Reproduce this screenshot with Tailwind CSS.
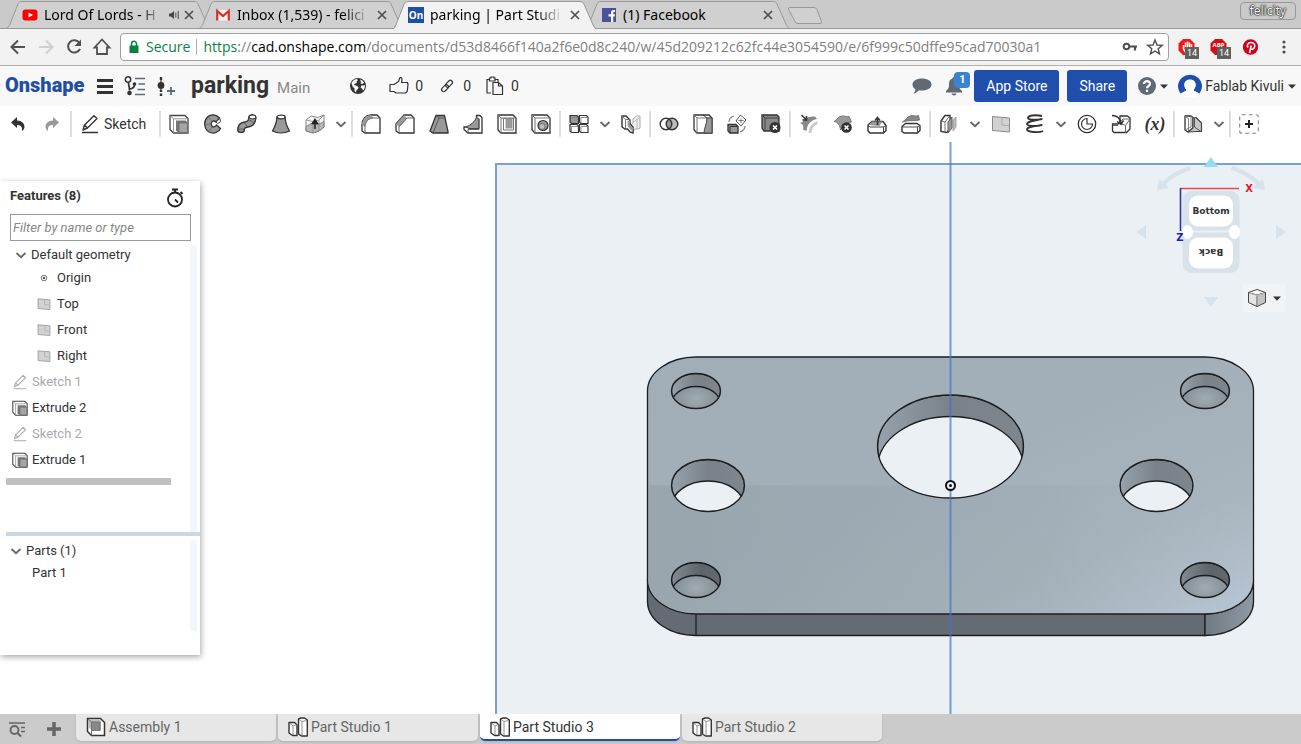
<!DOCTYPE html>
<html lang="en">
<head>
  <meta charset="utf-8">
  <title>parking | Part Studio 3</title>
  <script src="https://cdn.jsdelivr.net/npm/@tailwindcss/browser@4"></script>
</head>
<body class="h-screen flex flex-col overflow-hidden bg-white font-['Roboto',sans-serif] text-sm text-[#333]">

  <!-- Shared icons -->
  <svg class="hidden">
    <symbol id="chevron" viewBox="0 0 12 12"><path d="M1.5 4 6 8.2 10.5 4" fill="none" stroke="#666" stroke-width="1.8"/></symbol>
    <symbol id="caret" viewBox="0 0 8 5"><path d="M0 .5h8L4 4.8z" fill="#333"/></symbol>
    <symbol id="close" viewBox="0 0 16 16"><path d="m4 4 8 8M12 4l-8 8" stroke="#505050" stroke-width="1.7"/></symbol>
    <symbol id="pencil" viewBox="0 0 20 20"><path d="M2 18.5h16M3 16l1.500-5L14 1.800l3 2.800L7.500 14zM4.500 11l3 3" fill="none" stroke="currentColor" stroke-width="1.4" stroke-linejoin="round"/></symbol>
    <symbol id="plane" viewBox="0 0 20 20"><path d="M1.500 2.500l17 1.500v14L1.500 16.500z" fill="#d2d2d2" stroke="#8a8a8a"/><path d="M11 3.500v7.500l7.500.7" fill="none" stroke="#aaa"/></symbol>
    <symbol id="extrude" viewBox="0 0 20 20"><path d="M1 1.500h15l3 3V19H4.500L1 15.500z" fill="#fff" stroke="#444" stroke-width="1.3"/><path d="M1 1.500l3.500 3.300V19M4.500 4.800H19" fill="none" stroke="#888" stroke-width=".9"/><path d="M7 6.500h9.500l2 2V19H9.500L7 16.500z" fill="#777"/><path d="M10 9h8.500v9.500H10z" fill="#a5a5a5" stroke="#666" stroke-width=".7"/></symbol>
    <symbol id="studio" viewBox="0 0 20 20"><path d="M1 5.500h5.500L9 8v10.500H4.500L1 16z" fill="#fff" stroke="#333" stroke-width="1.400" stroke-linejoin="round"/><path d="M1.500 6 5 9v9M5 9l3.500-1.500" fill="none" stroke="#777" stroke-width=".8"/><path d="M10.500 2l2.500-1h3.500L19.300 3v16h-5.800l-3-2z" fill="#fff" stroke="#333" stroke-width="1.400" stroke-linejoin="round"/><path d="M11 2.300l3 2.200v14M14 4.500 18.500 3.500" fill="none" stroke="#777" stroke-width=".8"/></symbol>
    <symbol id="tab-shape" viewBox="0 0 205 28" preserveAspectRatio="none"><path d="M0 28.500C2 28 3 26 4 24L12 4C13 2 14 1.500 16 1.500H188C190 1.500 191 2 192 4L201 24C202 26 203 28 205 28.500" stroke="#999"/></symbol>
  </svg>

  <!-- Browser tabs -->
  <div class="flex h-7 shrink-0 items-stretch bg-[#cacaca] pl-[6px] font-['Noto_Sans',sans-serif] text-black">
    <div class="relative flex w-[205px] items-center pl-4 pr-[14px] pt-[2px]">
      <svg class="absolute inset-0 h-full w-full fill-[#d0d0d0]"><use href="#tab-shape"/></svg>
      <svg class="relative h-4 w-4 shrink-0" viewBox="0 0 16 16"><rect x=".5" y="2.500" width="15" height="11" rx="3" fill="#f00"/><path d="M6.500 5.500v5L11 8z" fill="#fff"/></svg>
      <span class="relative ml-[6px] w-[118px] whitespace-nowrap [mask-image:linear-gradient(to_right,#000_82%,transparent)]">Lord Of Lords - H</span>
      <svg class="relative ml-[6px] h-3 w-3 shrink-0" viewBox="0 0 12 12"><path d="M1 4.500h2L6 2v8L3 7.500H1z" fill="#444"/><path d="M7.800 3.500v5M10.300 2v8" stroke="#666" stroke-width="1.300"/></svg>
      <button class="relative ml-auto" aria-label="Close tab"><svg class="h-4 w-4"><use href="#close"/></svg></button>
    </div>
    <div class="relative -ml-3 flex w-[205px] items-center pl-4 pr-[14px] pt-[2px]">
      <svg class="absolute inset-0 h-full w-full fill-[#d0d0d0]"><use href="#tab-shape"/></svg>
      <svg class="relative h-4 w-4 shrink-0" viewBox="0 0 16 16"><path d="M1.500 3h13v10.500h-13z" fill="#f2f2f2"/><path d="M2.200 13.500V4L8 9l5.800-5v9.500" fill="none" stroke="#d93025" stroke-width="2.200"/></svg>
      <span class="relative ml-[6px] w-[133px] whitespace-nowrap [mask-image:linear-gradient(to_right,#000_80%,transparent)]">Inbox (1,539) - felici</span>
      <button class="relative ml-auto" aria-label="Close tab"><svg class="h-4 w-4"><use href="#close"/></svg></button>
    </div>
    <div class="relative z-10 -ml-3 flex w-[205px] items-center pl-4 pr-[14px] pt-[2px]">
      <svg class="absolute inset-0 h-[29px] w-full fill-[#f2f2f2]"><use href="#tab-shape"/></svg>
      <span class="relative flex h-4 w-4 shrink-0 items-center justify-center bg-[#1f4ea8] text-[10px] font-bold text-white">On</span>
      <span class="relative ml-[6px] w-[133px] whitespace-nowrap [mask-image:linear-gradient(to_right,#000_80%,transparent)]">parking | Part Studi</span>
      <button class="relative ml-auto" aria-label="Close tab"><svg class="h-4 w-4"><use href="#close"/></svg></button>
    </div>
    <div class="relative -ml-3 flex w-[205px] items-center pl-4 pr-[14px] pt-[2px]">
      <svg class="absolute inset-0 h-full w-full fill-[#d0d0d0]"><use href="#tab-shape"/></svg>
      <svg class="relative h-4 w-4 shrink-0" viewBox="0 0 16 16"><path d="M1 1h14v14H1z" fill="#4a52a0"/><path d="M10 15V9.500h-2.500V7.200H10V5.500C10 3.500 11.200 2.800 14 3v2c-1.500 0-1.800.2-1.800 1v1.200H14l-.3 2.300h-1.500V15z" fill="#fff"/></svg>
      <span class="relative ml-[6px] w-[133px] whitespace-nowrap">(1) Facebook</span>
      <button class="relative ml-auto" aria-label="Close tab"><svg class="h-4 w-4"><use href="#close"/></svg></button>
    </div>
    <button aria-label="New tab"><svg class="-ml-1 h-7 w-10" viewBox="0 0 40 28"><path d="M4 7.500h24q2 0 3 2l4.500 12q.5 2-1.500 2H12q-2 0-3-2L2.500 9.500q-.5-2 1.500-2z" fill="#d0d0d0" stroke="#999"/></svg></button>
    <button class="ml-auto mr-[5px] mt-[2px] h-[18px] rounded-sm border border-[#999] px-[9px] text-xs leading-4 text-white [text-shadow:0_0_1px_#000,0_0_1px_#000,0_0_2px_#000]">felicity</button>
  </div>

  <!-- Address bar -->
  <div class="flex h-[38px] shrink-0 items-center border-y border-t-[#999] border-b-[#b0b0b0] bg-[#f2f2f2] pl-2 pr-2 font-['Open_Sans',sans-serif]">
    <button aria-label="Back" class="mr-2"><svg class="h-5 w-5" viewBox="0 0 20 20"><path d="M17 10H4M10 3.500 3.500 10l6.500 6.500" fill="none" stroke="#505050" stroke-width="2"/></svg></button>
    <button aria-label="Forward" class="mr-2"><svg class="h-5 w-5" viewBox="0 0 20 20"><path d="M3 10h13M10 3.500l6.500 6.500-6.500 6.500" fill="none" stroke="#d0d0d0" stroke-width="2"/></svg></button>
    <button aria-label="Reload" class="mr-2"><svg class="h-5 w-5" viewBox="0 0 20 20"><path d="M15.500 6A6.200 6.200 0 1 0 16 11.800" fill="none" stroke="#505050" stroke-width="2"/><path d="M17 2.500V9h-6.500z" fill="#505050"/></svg></button>
    <button aria-label="Home" class="mr-2"><svg class="h-5 w-5" viewBox="0 0 20 20"><path d="M10 2.500 2.500 10.500H5V17h10v-6.500h2.500z" fill="none" stroke="#505050" stroke-width="1.800"/></svg></button>
    <div class="flex h-7 min-w-0 flex-1 items-center rounded-sm border border-[#a0a0a0] bg-white pl-[5px] pr-1">
      <svg class="h-4 w-4 shrink-0" viewBox="0 0 16 16"><path d="M3.500 6.500h9V14h-9z" fill="#0b8043"/><path d="M5.500 7V4.700a2.500 2.500 0 0 1 5 0V7" fill="none" stroke="#0b8043" stroke-width="1.500"/></svg>
      <span class="ml-1 text-[#0b8043]">Secure</span>
      <span class="mx-[6px] h-4 w-px shrink-0 bg-[#aaa]"></span>
      <a href="#" class="min-w-0 flex-1 overflow-hidden whitespace-nowrap text-[#808080]"><span class="text-[#0b8043]">https</span>://<span class="text-black">cad.onshape.com</span>/documents/d53d8466f140a2f6e0d8c240/w/45d209212c62fc44e3054590/e/6f999c50dffe95cad70030a1</a>
      <svg class="mr-2 h-4 w-4 shrink-0" viewBox="0 0 16 16"><circle cx="4.500" cy="7.500" r="2.800" fill="none" stroke="#505050" stroke-width="2"/><path d="M7.500 7.500H15M13 7.500v4" stroke="#505050" stroke-width="2.200"/></svg>
      <svg class="h-[18px] w-[18px] shrink-0" viewBox="0 0 18 18"><path d="m9 2 2 5 5.200.3-4 3.400 1.300 5.200L9 13l-4.500 2.900 1.300-5.200-4-3.400L7 7z" fill="none" stroke="#505050" stroke-width="1.400"/></svg>
    </div>
    <div class="ml-2 flex items-center gap-3">
      <button aria-label="AdBlock" class="relative"><svg class="h-5 w-5" viewBox="0 0 20 20"><path d="M6 2h7l4.500 4.500v7L13 18H6l-4.500-4.500v-7z" fill="#f01818"/><path d="M6.500 8v4l2.500 4h4l1.500-4V7M8.500 11V5.500M10.500 10V4.500M12.500 10V5.500" fill="none" stroke="#fff" stroke-width="1.500"/></svg><span class="absolute left-2 top-[10px] h-3 bg-[#606060] px-[2px] font-['Roboto',sans-serif] text-[9px] leading-3 text-white">14</span></button>
      <button aria-label="Adblock Plus" class="relative"><svg class="h-5 w-5" viewBox="0 0 20 20"><path d="M6 2h7l4.500 4.500v7L13 18H6l-4.500-4.500v-7z" fill="#d40e14"/><text x="9.500" y="9.500" text-anchor="middle" font-size="6" font-weight="bold" fill="#fff">ABP</text></svg><span class="absolute left-2 top-[10px] h-3 bg-[#606060] px-[2px] font-['Roboto',sans-serif] text-[9px] leading-3 text-white">14</span></button>
      <button aria-label="Pinterest"><svg class="h-5 w-5" viewBox="0 0 20 20"><circle cx="9.500" cy="10" r="7.700" fill="#d0021b"/><path d="M8.500 16 10.200 8.500M7 10.500C5.500 8 7 5.500 10 5.500s4.200 2.200 3.600 4.400C13 12.300 10.500 13 9.300 11.500" fill="none" stroke="#fff" stroke-width="1.600"/></svg></button>
      <button aria-label="Browser menu"><svg class="h-5 w-5" viewBox="0 0 20 20" fill="#505050"><circle cx="11" cy="5" r="1.600"/><circle cx="11" cy="10" r="1.600"/><circle cx="11" cy="15" r="1.600"/></svg></button>
    </div>
  </div>

  <!-- Document header -->
  <header class="flex h-10 shrink-0 items-center bg-[#f8f8f8] px-[5px]">
    <a href="#" class="w-[91px] pb-[2px] text-xl font-black leading-6 text-[#1f4ea8]">Onshape</a>
    <button aria-label="Main menu"><svg class="h-[18px] w-[18px]" viewBox="0 0 18 18"><path d="M1 3.500h16M1 9.500h16M1 15.500h16" stroke="#333" stroke-width="3"/></svg></button>
    <button aria-label="Versions and history" class="ml-[10px]"><svg class="h-[22px] w-[22px]" viewBox="0 0 22 22"><circle cx="4" cy="4.500" r="2.700" fill="none" stroke="#333" stroke-width="1.500"/><circle cx="5.500" cy="18" r="2.300" fill="#333"/><path d="M4.500 7.500c0 3 1 4 1 8M5.500 14c3-.5 5-1 5-4V9" fill="none" stroke="#333" stroke-width="1.700"/><circle cx="10.500" cy="9" r="1.800" fill="#333"/><path d="M11 3.500h10M14.500 9h6.500M13.500 14.500H21M11 19.500h10" stroke="#5f6a74" stroke-width="1.600"/></svg></button>
    <button aria-label="Insert" class="ml-[9px]"><svg class="h-[22px] w-[22px]" viewBox="0 0 22 22"><path d="M6 2v3M6 15v2M6 18.500v2.500" stroke="#333" stroke-width="2.400"/><path d="M6 5v12" stroke="#333" stroke-width="1.200"/><circle cx="6" cy="10.500" r="3.400" fill="#333"/><path d="M16 12v8M12 16h8" stroke="#5f6a74" stroke-width="1.800"/></svg></button>
    <h1 class="ml-[14px] text-[23px] font-bold leading-7">parking</h1>
    <span class="ml-2 pt-[6px] text-[15px] text-[#888]">Main</span>
    <svg class="ml-[39px] h-[18px] w-[18px]" viewBox="0 0 18 18"><circle cx="9" cy="9" r="8" fill="#333"/><path d="M2.500 6C3.500 4 5 2.500 7.500 2L9 3 7.500 4.500 8 6 6 6.500 5 8l2 .5L9.500 10 9 12l-1.500 1L7 15.500 5.500 14V11.500L3.500 9.500zM11 2.500c2 .5 3 1.300 4 3L13.500 7l-2-.5L12 5zM12.500 8.500l3.500-.3c0 2.300-.5 3.800-2 5.300L13 11.500l-1.500-1z" fill="#f8f8f8"/></svg>
    <button class="ml-[22px] flex items-center gap-[6px]" aria-label="Likes"><svg class="h-5 w-5" viewBox="0 0 20 20"><path d="M1 8.500h4l4.500-3 1.500-4c2-.3 2.500 1.500 1.500 5h6l.5 2-.8 7-1.700 1.500H7l-2-1.500H1z" fill="none" stroke="#333" stroke-width="1.200" stroke-linejoin="round"/></svg>0</button>
    <button class="ml-[14px] flex items-center gap-[6px]" aria-label="Linked documents"><svg class="h-5 w-5" viewBox="0 0 20 20"><g fill="none" stroke="#333" stroke-width="1.200"><rect x="8" y="5.700" width="8" height="4.200" rx="2.100" transform="rotate(-45 12 7.800)"/><rect x="4" y="10.100" width="8" height="4.200" rx="2.100" transform="rotate(-45 8 12.200)"/></g></svg>0</button>
    <button class="ml-[14px] flex items-center gap-[6px]" aria-label="Copies"><svg class="h-5 w-5" viewBox="0 0 20 20"><path d="M6 17H2V3.500h2.500M9.500 3.500H13V6M4.500 2h1.500V1h3v1h1v3h-5.500z" fill="none" stroke="#333" stroke-width="1.200"/><path d="M8 6.500h5.500L17.500 10v8.500H8zM13.500 6.500V10h4" fill="#f8f8f8" stroke="#333" stroke-width="1.200"/></svg>0</button>

    <button aria-label="Comments" class="ml-auto"><svg class="h-5 w-5" viewBox="0 0 20 20"><path d="M10 2.500c5.500 0 9.500 2.500 9.500 6s-4 6-9.500 6c-1 0-2 0-3-.3-1.500 1.500-3 2.600-5.500 3.300 1-1.500 1.800-2.500 2-4.300C1.500 12 .5 10.500.5 8.500c0-3.500 4-6 9.500-6z" fill="#5f6a74"/></svg></button>
    <button aria-label="Notifications" class="relative ml-3 mr-[10px]"><svg class="h-5 w-5" viewBox="0 0 20 20"><path d="M10 1c1 0 1.500.7 1.500 1.500C14.500 3.500 15 6 15 9c0 3.500 1.500 4.500 3 6v1.500H2V15c1.500-1.500 3-2.500 3-6s.5-5.500 3.500-6.500C8.500 1.700 9 1 10 1zM7.500 17.500h5c-.5 2.500-4.500 2.500-5 0z" fill="#5f6a74"/></svg><span class="absolute -top-1 left-[10px] h-4 w-4 rounded-sm bg-[#3b82d0] text-[11px] font-bold leading-4 text-white">1</span></button>
    <button class="h-8 rounded-[3px] bg-[#1f4ead] px-3 text-white">App Store</button>
    <button class="ml-2 h-8 rounded-[3px] bg-[#1f4ead] px-3 text-white">Share</button>
    <button aria-label="Help" class="ml-[11px] flex items-center gap-1"><svg class="h-[18px] w-[18px]" viewBox="0 0 18 18"><circle cx="9" cy="9" r="9" fill="#5f6a74"/><path d="M6 7c0-4 6.200-3.700 6 0C12 9 9 9 9 11.200M9 12.700V15" fill="none" stroke="#fff" stroke-width="2.200"/></svg><svg class="h-[5px] w-2"><use href="#caret"/></svg></button>
    <button class="ml-[10px] flex items-center"><svg class="mr-[3px] h-6 w-6" viewBox="0 0 24 24"><path d="M2.500 19.500A12 11.700 0 1 1 21.500 19.500L18 18l-3-2c4-3 3.500-10-3-10S5 13 9 16l-3 2z" fill="#1f4ead"/><path d="M12 5.500c6.500 0 7 7 3.500 10.500 1 2 5.500 1.500 5.500 5.500-4 3-14 3-18 0C3 17.500 7.500 18 8.500 16 5 12.500 5.500 5.500 12 5.500z" fill="#fff"/></svg>Fablab Kivuli<svg class="ml-1 h-[5px] w-2"><use href="#caret"/></svg></button>
  </header>

  <!-- Feature toolbar -->
  <div class="flex h-9 shrink-0 items-center bg-white pl-px" role="toolbar">
    <button aria-label="Undo" class="flex w-[34px] justify-center"><svg class="h-4 w-4" viewBox="0 0 16 16"><path d="M1 6.500 7 1v3.500c5 0 7.500 3 7.500 6.500 0 1.500-1 3-2.500 4 .5-4-1-6-5-6V12z" fill="#333"/></svg></button>
    <button aria-label="Redo" class="flex w-[34px] justify-center"><svg class="h-4 w-4" viewBox="0 0 16 16"><path d="M15 6.500 9 1v3.500C4 4.500 1.500 7.500 1.500 11c0 1.500 1 3 2.500 4-.5-4 1-6 5-6V12z" fill="#999"/></svg></button>
    <span class="mx-px h-[26px] w-[2px] bg-[#dcdcdc]"></span>
    <button class="flex w-[85px] items-center pl-[7px]"><svg class="mr-1 h-5 w-5"><use href="#pencil"/></svg>Sketch</button>
    <span class="mx-px h-[26px] w-[2px] bg-[#dcdcdc]"></span>

    <button aria-label="Extrude" class="flex w-[34px] justify-center"><svg class="h-5 w-5"><use href="#extrude"/></svg></button>
    <button aria-label="Revolve" class="flex w-[34px] justify-center"><svg class="h-5 w-5" viewBox="0 0 20 20"><path d="M16.500 4C13 0 8 0 5 2.500 0 7 1 15 6 18c5 2.500 10 0 11.500-3.500l-4-3.500c-1.500 2.500-3.500 2-4.300 1.200-1.500-1.500-1.200-4 .6-5 1.200-.5 2.200-.2 3.200.8z" fill="#999" stroke="#333" stroke-width="1.300"/><path d="M13 8l4-3.500.5 3.500-3 1.500z" fill="#fff" stroke="#444" stroke-width=".9"/><path d="M5 2.500l4 5M1.500 11l7-1.500M6 18l3-6" fill="none" stroke="#666" stroke-width=".8"/></svg></button>
    <button aria-label="Sweep" class="flex w-[34px] justify-center"><svg class="h-5 w-5" viewBox="0 0 20 20"><path d="M12 2.500C11.500 6.500 11 7.500 7.500 8 3 8.500.8 11.500.8 16.500c.5 2.500 6 2.500 6.500 0 0-2.500.7-3 3.700-3.500 5.500-.8 7.500-4 8-9.500C18.500.5 12.500.3 12 2.500z" fill="#999" stroke="#333" stroke-width="1.400"/><ellipse cx="15.500" cy="3" rx="3.400" ry="1.900" fill="#fff" stroke="#333"/><path d="M.8 16.500c.5-2 6-2 6.500 0M7 8l3.500 5M12 6l6 3" fill="none" stroke="#555" stroke-width=".9"/></svg></button>
    <button aria-label="Loft" class="flex w-[34px] justify-center"><svg class="h-5 w-5" viewBox="0 0 20 20"><path d="M6 3c-.3 5-1.500 9-4.500 14 5 2.500 12 2.500 17 0C15.500 12 14.300 8 14 3z" fill="#999" stroke="#333" stroke-width="1.300"/><ellipse cx="10" cy="3" rx="4" ry="1.800" fill="#fff" stroke="#333" stroke-width="1.200"/></svg></button>
    <button aria-label="Thicken" class="flex w-[34px] justify-center"><svg class="h-5 w-5" viewBox="0 0 20 20"><path d="M1 6 6 2l7 1.500L19 1v12l-5 4-6 2-7-2z" fill="#f4f4f4" stroke="#888"/><path d="M1 12.500 6 9.500l7 1 6-3V13l-5 4-6 2-7-2z" fill="#b5b5b5" stroke="#777" stroke-width=".8"/><path d="M1 6l7 1.500 6-1.500 5-5M14 6v11M8 7.500V19" fill="none" stroke="#888" stroke-width=".8"/><path d="M10 15V8M7.500 9.500 10 5.500l2.500 4z" fill="#222" stroke="#222" stroke-width="1.500"/></svg></button>
    <button aria-label="More solids" class="flex w-[18px] justify-center"><svg class="h-3 w-3"><use href="#chevron"/></svg></button>
    <span class="mx-px h-[26px] w-[2px] bg-[#dcdcdc]"></span>

    <button aria-label="Fillet" class="flex w-[34px] justify-center"><svg class="h-5 w-5" viewBox="0 0 20 20"><path d="M1 11C1 5 5 1 10 1h6l3 3v15H4l-3-2z" fill="#fff" stroke="#333" stroke-width="1.300"/><path d="M1 11C1 5 5 1 10 1l2.500 3C7 4 4 8 4 13z" fill="#999"/><path d="M4 19v-6c0-5 3.500-9 8.500-9H19" fill="none" stroke="#555" stroke-width=".9"/></svg></button>
    <button aria-label="Chamfer" class="flex w-[34px] justify-center"><svg class="h-5 w-5" viewBox="0 0 20 20"><path d="M1 10 9 1h7l3 3v15H4l-3-2z" fill="#fff" stroke="#333" stroke-width="1.300"/><path d="M1 10 9 1l3 3-8 9z" fill="#999"/><path d="M4 19v-6l8-9h7" fill="none" stroke="#555" stroke-width=".9"/></svg></button>
    <button aria-label="Draft" class="flex w-[34px] justify-center"><svg class="h-5 w-5" viewBox="0 0 20 20"><path d="M1 17 7 1.500h8.500L19 17.500v1.500H4z" fill="#999" stroke="#333" stroke-width="1.300"/><path d="M4 19 10 4h6M7 1.500 10 4" fill="none" stroke="#555"/></svg></button>
    <button aria-label="Rib" class="flex w-[34px] justify-center"><svg class="h-5 w-5" viewBox="0 0 20 20"><path d="M13.500 1.500H17l2 2V19H5l-4-3.500V13h4l8.500-1z" fill="#fff" stroke="#333" stroke-width="1.300"/><path d="M3 13c5-2 8.500-5 10.500-9.500L16 5v9.500H6z" fill="#999" stroke="#444"/><path d="M5 19v-3.500h11V4.500" fill="none" stroke="#555" stroke-width=".9"/></svg></button>
    <button aria-label="Shell" class="flex w-[34px] justify-center"><svg class="h-5 w-5" viewBox="0 0 20 20"><path d="M1 1h15l3 3v15H4l-3-3z" fill="#fff" stroke="#333" stroke-width="1.300"/><path d="M1 1l3 3h15M4 4v15M6.500 4.500h10V16h-10z" fill="none" stroke="#777"/><path d="M8.500 4.500h7v10h-7z" fill="#999"/></svg></button>
    <button aria-label="Hole" class="flex w-[34px] justify-center"><svg class="h-5 w-5" viewBox="0 0 20 20"><path d="M1 1h15l3 3v15H4l-3-3z" fill="#fff" stroke="#333" stroke-width="1.300"/><path d="M1 1l3 3h15M4 4v15" fill="none" stroke="#777"/><circle cx="12" cy="11.500" r="5" fill="#999" stroke="#333" stroke-width="1.200"/><circle cx="11" cy="12.500" r="3" fill="#bbb" stroke="#666" stroke-width=".8"/></svg></button>
    <span class="mx-px h-[26px] w-[2px] bg-[#dcdcdc]"></span>

    <button aria-label="Linear pattern" class="flex w-[34px] justify-center"><svg class="h-5 w-5" viewBox="0 0 20 20"><g fill="#fff" stroke="#333" stroke-width="1.200"><path d="M1 1.500h7l1.500 1.500v6.500H2.500L1 8z" fill="#999"/><path d="M10.500 1.500h7L19 3v6.500h-7L10.500 8zM1 10.500h7L9.500 12v6.500h-7L1 17zM10.500 10.500h7L19 12v6.500h-7L10.500 17z"/></g><path d="M2.500 3.500h7M12 3.500h7M12 3.500v6M2.500 12.500h7M2.500 12.500v6M12 12.500h7M12 12.500v6" stroke="#777" stroke-width=".8"/></svg></button>
    <button aria-label="More patterns" class="flex w-[18px] justify-center"><svg class="h-3 w-3"><use href="#chevron"/></svg></button>
    <button aria-label="Mirror" class="flex w-[34px] justify-center"><svg class="h-5 w-5" viewBox="0 0 20 20"><path d="M19 2h-3.500L12 5v4l-2 2v6l2 1 2-3h3l2-1z" fill="#eee" stroke="#aaa"/><path d="M16 5v10M12 9l4-4 3-1" fill="none" stroke="#bbb"/><path d="M1 2h4l4 4v4l3 3v6l-3-1-2.500-3H4L1 13z" fill="#fff" stroke="#333" stroke-width="1.400"/><path d="M1 2l3.500 3.500V15M4.500 5.500H9" fill="none" stroke="#666" stroke-width=".9"/><path d="M6.500 6.500 9 7v4l3 3v4l-3-3-2.500-3z" fill="#999"/></svg></button>
    <span class="mx-px h-[26px] w-[2px] bg-[#dcdcdc]"></span>

    <button aria-label="Boolean" class="flex w-[34px] justify-center"><svg class="h-5 w-5" viewBox="0 0 20 20"><circle cx="13" cy="10" r="5.800" fill="#bbb"/><circle cx="7" cy="10" r="5.800" fill="#fff"/><path d="M10 5a5.800 5.800 0 0 1 0 10 5.800 5.800 0 0 1 0-10z" fill="#999"/><g fill="none" stroke="#333" stroke-width="1.400"><circle cx="7" cy="10" r="5.800"/><circle cx="13" cy="10" r="5.800"/></g></svg></button>
    <button aria-label="Split" class="flex w-[34px] justify-center"><svg class="h-5 w-5" viewBox="0 0 20 20"><path d="M1 1h15l3 3v15H4l-3-3z" fill="#fff" stroke="#333" stroke-width="1.300"/><path d="M1 1l3 3h15M4 4v15" fill="none" stroke="#777"/><path d="M14 4h5v15h-8c0-5 3-9 3-15z" fill="#999" stroke="#444"/><path d="M10 1l4 3" stroke="#444"/></svg></button>
    <button aria-label="Transform" class="flex w-[34px] justify-center"><svg class="h-5 w-5" viewBox="0 0 20 20"><path d="M1 10.500h8l2 2V19H3l-2-2z" fill="#999" stroke="#333" stroke-width="1.300"/><path d="M3 12.500h8M3 12.500V19" stroke="#333"/><path d="M13.500 1l5.500 5-5 6-5-5z" fill="#fff" stroke="#555"/><path d="M14 4.500V9M11.500 6.500h5" stroke="#777"/><path d="M2 8c0-3 2-5 5-6M18 12c0 3-2 5-5 6" fill="none" stroke="#888" stroke-width="1.300"/></svg></button>
    <button aria-label="Delete part" class="flex w-[34px] justify-center"><svg class="h-5 w-5" viewBox="0 0 20 20"><path d="M1 1h15l2 2v14H3l-2-3z" fill="#888" stroke="#333" stroke-width="1.300"/><path d="M1 1l3 3h14M4 4v12" fill="none" stroke="#444"/><circle cx="14" cy="13.500" r="5.500" fill="#333"/><path d="m12 11.500 4 4M16 11.500l-4 4" stroke="#fff" stroke-width="1.700"/></svg></button>
    <span class="mx-px h-[26px] w-[2px] bg-[#dcdcdc]"></span>

    <button aria-label="Modify fillet" class="flex w-[34px] justify-center"><svg class="h-5 w-5" viewBox="0 0 20 20"><path d="M1 9c2-1 3-1 4-3 3-3 7-4 11-3.500L18 5C12 6 8 10 7.500 17L4 15.500C5 12 4 10 1 9z" fill="#888"/><path d="M9.500 19C10 12.500 13 9 19 7l-1 4c-3 .5-5 3-5.500 8z" fill="#ccc"/><path d="M2.500 1 7 5.500M7.500 2v4h-4" fill="none" stroke="#333" stroke-width="1.600"/></svg></button>
    <button aria-label="Delete face" class="flex w-[34px] justify-center"><svg class="h-5 w-5" viewBox="0 0 20 20"><path d="M1 7.500C4 6 5 2 10 2c2 0 4 1 6 .5L18.500 8 12 10l-4.500 6C7 11 4.500 8 1 7.500z" fill="#999" stroke="#777"/><circle cx="13.500" cy="13.500" r="5.300" fill="#333"/><path d="m11.500 11.500 4 4M15.500 11.500l-4 4" stroke="#fff" stroke-width="1.700"/></svg></button>
    <button aria-label="Move face" class="flex w-[34px] justify-center"><svg class="h-5 w-5" viewBox="0 0 20 20"><path d="M1 11l4-3.500h11l3 4v5L16.500 19H3l-2-2z" fill="#fff" stroke="#333" stroke-width="1.400"/><path d="M1.500 11 5 7.500h10.500l-3 4.500z" fill="#999"/><path d="M1 11.500l2 1.500h13l3-1.500M16.500 13v5" fill="none" stroke="#444"/><path d="M10.500 11V5M8 6.500l2.500-3 2.500 3" fill="none" stroke="#333" stroke-width="1.500"/></svg></button>
    <button aria-label="Replace face" class="flex w-[34px] justify-center"><svg class="h-5 w-5" viewBox="0 0 20 20"><path d="M1.500 8C5 6 6 2 11 1.500c2 0 4 1 6.500 0L18.500 6C14 7.500 8 5.500 1.500 8z" fill="#888" stroke="#666" stroke-width=".8"/><path d="M1 12.500 4.500 9.500H16l3 2v5L16.500 19H3l-2-1.500z" fill="#fff" stroke="#333" stroke-width="1.400"/><path d="M1.500 13H16l3-1.500M16.500 13v5" fill="none" stroke="#555"/></svg></button>
    <span class="mx-px h-[26px] w-[2px] bg-[#dcdcdc]"></span>

    <button aria-label="Move surface" class="flex w-[34px] justify-center"><svg class="h-5 w-5" viewBox="0 0 20 20"><path d="M14 6l3-3v10l-3 4z" fill="#bbb" stroke="#999" stroke-width=".8"/><path d="M2 7 6 1.500h5L11.500 14 8 18.500 2 17.500z" fill="#fff" stroke="#333" stroke-width="1.400"/><path d="M2 7l4 1 4.500-6M6 8v10" fill="none" stroke="#666" stroke-width=".9"/><path d="M9 8l4-5v11l-4 5z" fill="#999" stroke="#555" stroke-width=".9"/></svg></button>
    <button aria-label="More surfaces" class="flex w-[18px] justify-center"><svg class="h-3 w-3"><use href="#chevron"/></svg></button>
    <button aria-label="Plane" class="flex w-[34px] justify-center"><svg class="h-5 w-5"><use href="#plane"/></svg></button>
    <button aria-label="Helix" class="flex w-[34px] justify-center"><svg class="h-5 w-5" viewBox="0 0 20 20"><path d="M17 2C10 .5 3 1.500 3 4s14 2 14 .5M17 5C8 6.500 2 7.500 2 10s15 2.500 15 .5M17 11C8 12.500 2 13 2 15.500S14 19 18 17" fill="none" stroke="#333" stroke-width="1.900"/></svg></button>
    <button aria-label="More curves" class="flex w-[18px] justify-center"><svg class="h-3 w-3"><use href="#chevron"/></svg></button>
    <button aria-label="Mate connector" class="flex w-[34px] justify-center"><svg class="h-5 w-5" viewBox="0 0 20 20"><circle cx="10" cy="10" r="8.700" fill="none" stroke="#333" stroke-width="1.300"/><path d="M10 4.500a5.500 5.500 0 1 0 5.500 5.500H10z" fill="none" stroke="#333" stroke-width="1.200"/></svg></button>
    <button aria-label="Derived" class="flex w-[34px] justify-center"><svg class="h-5 w-5" viewBox="0 0 20 20"><path d="M9 2h7.500L19 4v11l-3.500 3.500H3L1.500 17V10H7l2-3z" fill="#fff" stroke="#333" stroke-width="1.300"/><path d="M10 7l2-2h7M2 11.500h5M11 10l3.500 1.500v7M14.500 11.500 19 5" fill="none" stroke="#666"/><path d="M1 1.500c5 0 8 2 9 8M6 7.500l4 3 2.500-4" fill="none" stroke="#333" stroke-width="1.500"/></svg></button>
    <button aria-label="Variable" class="w-[34px] text-center font-['Liberation_Serif',serif] text-lg font-bold italic leading-5">(x)</button>
    <span class="mx-px h-[26px] w-[2px] bg-[#dcdcdc]"></span>

    <button aria-label="Sheet metal" class="flex w-[34px] justify-center"><svg class="h-5 w-5" viewBox="0 0 20 20"><path d="M2 2h6l2 1.500V14l-5 4-3-2z" fill="#fff" stroke="#333" stroke-width="1.300" stroke-linejoin="round"/><path d="M2 2l3.500 2.500V17M8 2v11l-6 3" fill="none" stroke="#777" stroke-width=".9"/><path d="M10 4l3-.5L18.500 9v8.500H13L5 18l5-4z" fill="#c8c8c8" stroke="#444" stroke-width="1.200" stroke-linejoin="round"/><path d="M11.500 4.500V13l6.500 4.500" fill="none" stroke="#555"/></svg></button>
    <button aria-label="More sheet metal tools" class="flex w-[18px] justify-center"><svg class="h-3 w-3"><use href="#chevron"/></svg></button>
    <span class="mx-px h-[26px] w-[2px] bg-[#dcdcdc]"></span>
    <button aria-label="Custom feature" class="flex w-[34px] justify-center"><svg class="h-5 w-5" viewBox="0 0 20 20"><rect x=".7" y=".7" width="18.600" height="18.600" rx="2" fill="none" stroke="#888" stroke-width="1.100" stroke-dasharray="4 3"/><path d="M10 6v8M6 10h8" stroke="#222" stroke-width="2"/></svg></button>
  </div>

  <!-- Graphics area -->
  <main class="relative min-h-0 flex-1">
    <svg class="h-full w-full" viewBox="0 142 1301 572" preserveAspectRatio="xMaxYMid slice">
      <defs>
        <linearGradient id="face" x1="0" y1="0" x2="1" y2="1"><stop offset="0" stop-color="#a2aeb7"/><stop offset=".45" stop-color="#a2afb9"/><stop offset=".75" stop-color="#a8b5be"/><stop offset="1" stop-color="#b8c5d3"/></linearGradient>
        <linearGradient id="wall"><stop offset="0" stop-color="#96a2ac"/><stop offset=".5" stop-color="#7a8188"/><stop offset="1" stop-color="#7e868e"/></linearGradient>
        <linearGradient id="wall-dark"><stop offset="0" stop-color="#828b93"/><stop offset=".6" stop-color="#5d646b"/><stop offset="1" stop-color="#626970"/></linearGradient>
        <linearGradient id="side-right"><stop offset="0" stop-color="#707a82"/><stop offset="1" stop-color="#8e99a5"/></linearGradient>
        <linearGradient id="shade" x1="0" y1="0" x2="1" y2="0"><stop offset="0" stop-color="#8c979d" stop-opacity=".4"/><stop offset=".65" stop-color="#97a4ab" stop-opacity=".3"/><stop offset="1" stop-color="#a8b5be" stop-opacity="0"/></linearGradient>
        <radialGradient id="floor" cy=".35"><stop offset="0" stop-color="#a0abb2"/><stop offset="1" stop-color="#838d95"/></radialGradient>
        <clipPath id="small"><ellipse rx="24.500" ry="17.500"/></clipPath>
        <clipPath id="medium"><ellipse rx="36.500" ry="26"/></clipPath>
        <clipPath id="large"><ellipse rx="73" ry="51.500"/></clipPath>
      </defs>
      <path d="M496 714V164h805v550z" fill="#ebf0f5"/>
      <path d="M496 714V164h805" fill="none" stroke="#7b9fd3" stroke-width="2"/>

      <g stroke="#1c1e20" stroke-width="1.300">
        <path d="M647.500 580v22A48.500 34 0 0 0 696 635.500h509V600z" fill="#646b73"/>
        <path d="M1205 614A48.500 34 0 0 0 1253.500 580V602A48.500 34 0 0 1 1205 635.500z" fill="url(#side-right)"/>
        <path d="M696 613v22.500"/>
        <path d="M647.500 391A48.500 34 0 0 1 696 357h509a48.500 34 0 0 1 48.500 34v189a48.500 34 0 0 1-48.500 34H696a48.500 34 0 0 1-48.500-34z" fill="url(#face)"/>
      </g>
      <path d="M648 485.500h605V580a48 34 0 0 1-48 33H696a48 34 0 0 1-48-33z" fill="url(#shade)"/>

      <g fill="none" stroke="#1c1e20" stroke-width="1.300">
        <g transform="translate(696 391)"><g clip-path="url(#small)"><ellipse rx="24.500" ry="17.500" fill="url(#wall)"/><ellipse cy="13" rx="24.500" ry="17.500" fill="url(#floor)"/></g><ellipse rx="24.500" ry="17.500"/></g>
        <g transform="translate(1205 391)"><g clip-path="url(#small)"><ellipse rx="24.500" ry="17.500" fill="url(#wall)"/><ellipse cy="13" rx="24.500" ry="17.500" fill="url(#floor)"/></g><ellipse rx="24.500" ry="17.500"/></g>
        <g transform="translate(696 580)"><g clip-path="url(#small)"><ellipse rx="24.500" ry="17.500" fill="url(#wall-dark)"/><ellipse cy="13" rx="24.500" ry="17.500" fill="url(#floor)"/></g><ellipse rx="24.500" ry="17.500"/></g>
        <g transform="translate(1205 580)"><g clip-path="url(#small)"><ellipse rx="24.500" ry="17.500" fill="url(#wall-dark)"/><ellipse cy="13" rx="24.500" ry="17.500" fill="url(#floor)"/></g><ellipse rx="24.500" ry="17.500"/></g>
        <g transform="translate(708 485.500)"><g clip-path="url(#medium)"><ellipse rx="36.500" ry="26" fill="url(#wall)"/><ellipse cy="21.500" rx="36.500" ry="26" fill="#ebf0f5"/></g><ellipse rx="36.500" ry="26"/></g>
        <g transform="translate(1156.500 485.500)"><g clip-path="url(#medium)"><ellipse rx="36.500" ry="26" fill="url(#wall)"/><ellipse cy="21.500" rx="36.500" ry="26" fill="#ebf0f5"/></g><ellipse rx="36.500" ry="26"/></g>
        <g transform="translate(950.500 446.500)"><g clip-path="url(#large)"><ellipse rx="73" ry="51.500" fill="url(#wall)"/><ellipse cy="21.500" rx="73" ry="51.500" fill="#ebf0f5"/></g><ellipse rx="73" ry="51.500"/></g>
      </g>

      <path d="M950.500 142v572" stroke="#3f77c8" stroke-opacity=".7" stroke-width="2"/>
      <circle cx="950.500" cy="485.500" r="4.500" fill="#ebf0f5" stroke="#111" stroke-width="2"/>
      <circle cx="950.500" cy="485.500" r="1.500" fill="#111"/>
    </svg>

    <!-- View cube -->
    <svg class="absolute right-0 top-0 h-[172px] w-[181px]" viewBox="1120 142 181 172">
      <g fill="#d7e2eb">
        <rect x="1182.500" y="191" width="57" height="82" rx="9"/>
        <path d="M1136 232l10-7v14zM1286 232l-10-7v14zM1211 307l-7-10h14z"/>
        <path d="M1157 190l2-11 3 3c8-8 18-13 28-16l1 4c-9 3-17 7-25 14l3 4zM1265 190l-2-11-3 3c-8-8-18-13-28-16l-1 4c9 3 17 7 25 14l-3 4z"/>
      </g>
      <path d="M1211 157l7 10h-14z" fill="#93dcf5"/>
      <path d="M1183 231.500h56" stroke="#ebf0f5" stroke-width="2"/>
      <path d="M1180.500 188.500H1239" stroke="#e8494d" stroke-width="1.600"/>
      <path d="M1180.500 188v43" stroke="#2a35b8" stroke-width="1.600"/>
      <rect x="1189" y="195.500" width="44" height="31" rx="9" fill="#fff"/>
      <rect x="1189" y="237.500" width="44" height="31" rx="9" fill="#fff"/>
      <ellipse cx="1187.500" cy="232" rx="5.500" ry="7" fill="#fff"/><ellipse cx="1234.500" cy="232" rx="5.500" ry="7" fill="#fff"/>
      <g class="font-['DejaVu_Sans',sans-serif]" font-size="9" font-weight="700" text-anchor="middle" fill="#333">
        <text x="1211" y="214">Bottom</text>
        <text x="1211" y="252" dy="3" transform="rotate(180 1211 252)">Back</text>
        <text x="1249" y="192" font-size="10" fill="#e01b22">X</text>
        <text x="1180" y="241" font-size="10" fill="#2020c8">Z</text>
      </g>
    </svg>
    <button aria-label="View tools" class="absolute right-[15px] top-[142px] flex h-7 w-11 items-center justify-center gap-[6px] rounded-sm bg-[#f1f4f7]">
      <svg class="h-5 w-5" viewBox="0 0 20 20" stroke="#444" stroke-linejoin="round"><path d="M1.500 4.500 10 7v11.500l-8.500-4z" fill="#e4e4e4"/><path d="M18.500 4.500 10 7v11.500l8.500-4z" fill="#c4c4c4"/><path d="M10 1.500 1.500 4.500 10 7l8.500-2.500z" fill="#fafafa"/><path d="M2 5l8 2.300v10.500M18 5l-8 2.300" fill="none" stroke="#bbb" stroke-width="1.200"/></svg>
      <svg class="h-[5px] w-2"><use href="#caret"/></svg>
    </button>

    <!-- Feature list -->
    <aside class="absolute left-0 top-[39px] w-[200px] bg-white pb-6 text-[13px] shadow-[1px_2px_6px_rgba(0,0,0,0.35)]">
      <div class="flex h-[33px] items-center justify-between pl-[10px] pr-[15px]">
        <h2 class="pb-[3px] font-bold">Features (8)</h2>
        <svg class="h-5 w-5" viewBox="0 0 20 20"><circle cx="10" cy="11.500" r="7" fill="none" stroke="#222" stroke-width="1.800"/><path d="M7 1.500h6M10 2v2.500M15.500 4l2 2M10 11.500l3 3" stroke="#222" stroke-width="1.800"/></svg>
      </div>
      <div class="pl-[10px] pr-[9px]">
        <input type="text" aria-label="Filter features" placeholder="Filter by name or type" class="block h-[27px] w-full border border-[#999] px-[2px] italic placeholder:text-[#888]">
      </div>
      <div class="mr-[3px] mt-1 h-[287px] border-r-[7px] border-[#f2f7fb]">
        <button class="flex h-5 items-center pl-[15px]"><svg class="mr-1 h-3 w-3"><use href="#chevron"/></svg>Default geometry</button>
        <ul>
          <li class="flex h-[26px] items-center pl-[37px]"><svg class="mr-[6px] h-[14px] w-[14px]" viewBox="0 0 14 14"><circle cx="7" cy="7" r="2.800" fill="none" stroke="#777"/><circle cx="7" cy="7" r="1.200" fill="#555"/></svg>Origin</li>
          <li class="flex h-[26px] items-center pl-[37px]"><svg class="mr-[6px] h-[14px] w-[14px]"><use href="#plane"/></svg>Top</li>
          <li class="flex h-[26px] items-center pl-[37px]"><svg class="mr-[6px] h-[14px] w-[14px]"><use href="#plane"/></svg>Front</li>
          <li class="flex h-[26px] items-center pl-[37px]"><svg class="mr-[6px] h-[14px] w-[14px]"><use href="#plane"/></svg>Right</li>
          <li class="flex h-[26px] items-center pl-3 text-[#aaa]"><svg class="mr-1 h-4 w-4"><use href="#pencil"/></svg>Sketch 1</li>
          <li class="flex h-[26px] items-center pl-3"><svg class="mr-1 h-4 w-4"><use href="#extrude"/></svg>Extrude 2</li>
          <li class="flex h-[26px] items-center pl-3 text-[#aaa]"><svg class="mr-1 h-4 w-4"><use href="#pencil"/></svg>Sketch 2</li>
          <li class="flex h-[26px] items-center pl-3"><svg class="mr-1 h-4 w-4"><use href="#extrude"/></svg>Extrude 1</li>
        </ul>
        <div class="ml-[6px] mr-[19px] mt-[5px] h-[7px] bg-[#c0c0c0]"></div>
      </div>
      <div class="ml-[6px] h-1 bg-[#cbd8e3]"></div>
      <div class="mr-[3px] mt-1 h-[91px] border-r-[7px] border-[#f2f7fb]">
        <button class="flex h-[22px] items-center pl-[10px]"><svg class="mr-1 h-3 w-3"><use href="#chevron"/></svg>Parts (1)</button>
        <p class="h-[22px] pl-8 leading-[22px]">Part 1</p>
      </div>
    </aside>
  </main>

  <!-- Document tabs -->
  <nav class="flex h-[30px] shrink-0 items-start gap-[2px] bg-[#cbcbcb] text-[#666]">
    <div class="flex h-[30px] w-[74px] items-center pl-2">
      <button aria-label="Search tabs"><svg class="h-[18px] w-[18px]" viewBox="0 0 18 18"><path d="M1 3h16M13 7.500h4M13 11.500h4" stroke="#666" stroke-width="1.700"/><circle cx="6.500" cy="10" r="4" fill="none" stroke="#666" stroke-width="1.900"/><path d="m9.500 13 3.500 3.500" stroke="#666" stroke-width="2"/></svg></button>
      <button aria-label="Add tab" class="ml-5"><svg class="h-4 w-4" viewBox="0 0 16 16"><path d="M8 1v14M1 8h14" stroke="#666" stroke-width="3.500"/></svg></button>
    </div>
    <a href="#" class="flex h-[27px] w-[200px] items-center rounded-b-[5px] bg-[#e7e7e7] pb-[2px] pl-[10px] shadow-sm"><svg class="mr-[3px] h-5 w-5" viewBox="0 0 20 20"><path d="M1.500 1.500h13l4 4v13h-13L1.500 14.500z" fill="#fff" stroke="#333" stroke-width="1.500"/><path d="M2 2h11l2 2v9.500H6L2 10z" fill="#bbb"/><path d="M5.500 5H14v8.500H5.500z" fill="#888" stroke="#666" stroke-width=".8"/><path d="M2 2l3.500 3M5.500 13.500v5" stroke="#666"/></svg>Assembly 1</a>
    <a href="#" class="flex h-[27px] w-[200px] items-center rounded-b-[5px] bg-[#e7e7e7] pb-[2px] pl-[10px] shadow-sm"><svg class="mr-[3px] h-5 w-5"><use href="#studio"/></svg>Part Studio 1</a>
    <a href="#" class="flex h-[27px] w-[200px] items-center rounded-b-[5px] border-b-2 border-[#1f4ead] bg-white pl-[10px] text-[#333] shadow-sm"><svg class="mr-[3px] h-5 w-5"><use href="#studio"/></svg>Part Studio 3</a>
    <a href="#" class="flex h-[27px] w-[200px] items-center rounded-b-[5px] bg-[#e7e7e7] pb-[2px] pl-[10px] shadow-sm"><svg class="mr-[3px] h-5 w-5"><use href="#studio"/></svg>Part Studio 2</a>
  </nav>
</body>
</html>
